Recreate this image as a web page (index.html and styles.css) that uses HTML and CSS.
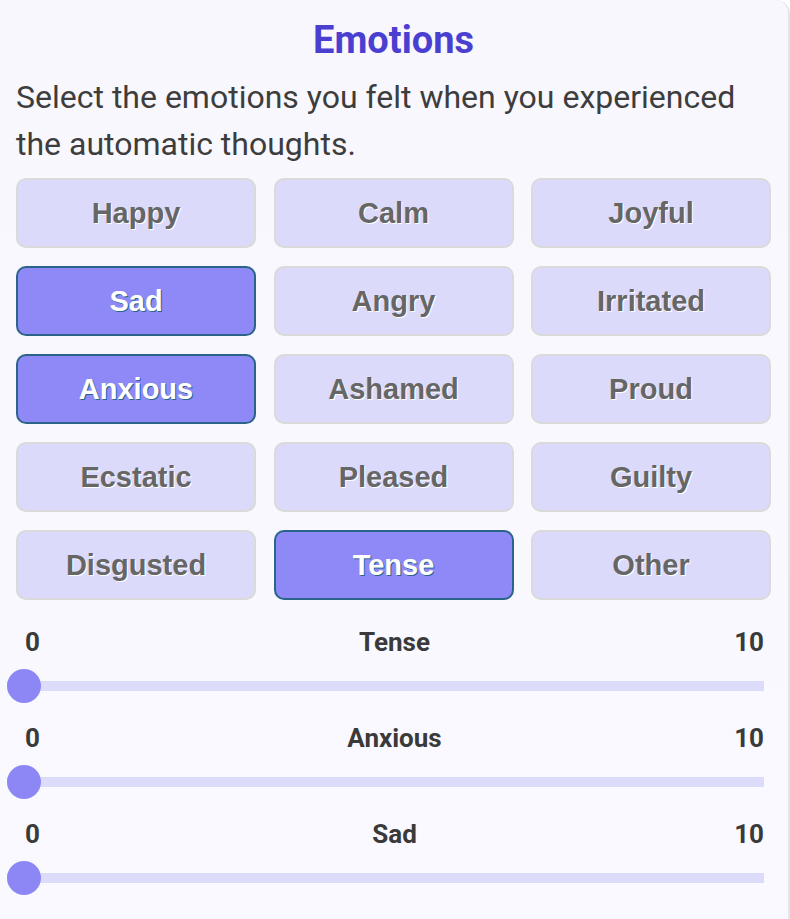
FILE: index.html
```html
<!DOCTYPE html>
<html>
<head>
<meta charset="utf-8">
<link rel="stylesheet" href="styles.css">
</head>
<body>
<div class="card">
  <h1 class="title">Emotions</h1>
  <p class="desc">Select the emotions you felt when you experienced the automatic thoughts.</p>
  <div class="grid">
    <button class="emo">Happy</button>
    <button class="emo">Calm</button>
    <button class="emo">Joyful</button>
    <button class="emo sel">Sad</button>
    <button class="emo">Angry</button>
    <button class="emo">Irritated</button>
    <button class="emo sel">Anxious</button>
    <button class="emo">Ashamed</button>
    <button class="emo">Proud</button>
    <button class="emo">Ecstatic</button>
    <button class="emo">Pleased</button>
    <button class="emo">Guilty</button>
    <button class="emo">Disgusted</button>
    <button class="emo sel">Tense</button>
    <button class="emo">Other</button>
  </div>
  <div class="sliders">
    <div class="slider">
      <div class="labels"><span class="min">0</span><span class="name">Tense</span><span class="max">10</span></div>
      <div class="track"><span class="thumb"></span></div>
    </div>
    <div class="slider">
      <div class="labels"><span class="min">0</span><span class="name">Anxious</span><span class="max">10</span></div>
      <div class="track"><span class="thumb"></span></div>
    </div>
    <div class="slider">
      <div class="labels"><span class="min">0</span><span class="name">Sad</span><span class="max">10</span></div>
      <div class="track"><span class="thumb"></span></div>
    </div>
  </div>
</div>
</body>
</html>
```
FILE: styles.css
```css
html, body {
  margin: 0;
  padding: 0;
  background: #ffffff;
}
.card {
  width: 790px;
  height: 919px;
  box-sizing: border-box;
  background: linear-gradient(180deg, #f7f7fd 0%, #faf9ff 100%);
  border-right: 2px solid #e2e5ee;
  border-top-right-radius: 14px;
  padding: 20px 17px 0 16px;
  font-family: Roboto, "Noto Sans", sans-serif;
  overflow: hidden;
}
.title {
  margin: 0;
  font-size: 38px;
  line-height: 40px;
  font-weight: 700;
  color: #4a3fd0;
  text-align: center;
}
.desc {
  margin: 14px 0 0 0;
  width: 745px;
  font-size: 32px;
  line-height: 47px;
  color: #3d3d3d;
}
.grid {
  margin-top: 10px;
  display: grid;
  grid-template-columns: repeat(3, 240px);
  grid-auto-rows: 70px;
  column-gap: 17.5px;
  row-gap: 18px;
}
.emo {
  margin: 0;
  padding: 0;
  box-sizing: border-box;
  border: 2px solid #dadada;
  border-radius: 10px;
  background: #dcdafb;
  font-family: "Liberation Sans", Arial, sans-serif;
  font-weight: 700;
  font-size: 29px;
  color: #666666;
  text-shadow: 1px 1px 0 #ffffff;
}
.emo.sel {
  background: #8e89f6;
  border-color: #2a6589;
  color: #ffffff;
  text-shadow: 1px 1px 0 #2a6589;
}
.sliders {
  margin: 27px 7px 0 -9px;
}
.slider {
  height: 96px;
}
.labels {
  display: grid;
  grid-template-columns: 1fr auto 1fr;
  padding-left: 18px;
  font-size: 26px;
  line-height: 30px;
  font-weight: 700;
  color: #3a3a3a;
}
.labels .max {
  text-align: right;
}
.track {
  position: relative;
  margin-top: 24px;
  height: 10px;
  background: #dcdcfa;
}
.thumb {
  position: absolute;
  left: 0;
  top: -12px;
  width: 34px;
  height: 34px;
  border-radius: 50%;
  background: #8c87f5;
}
```
